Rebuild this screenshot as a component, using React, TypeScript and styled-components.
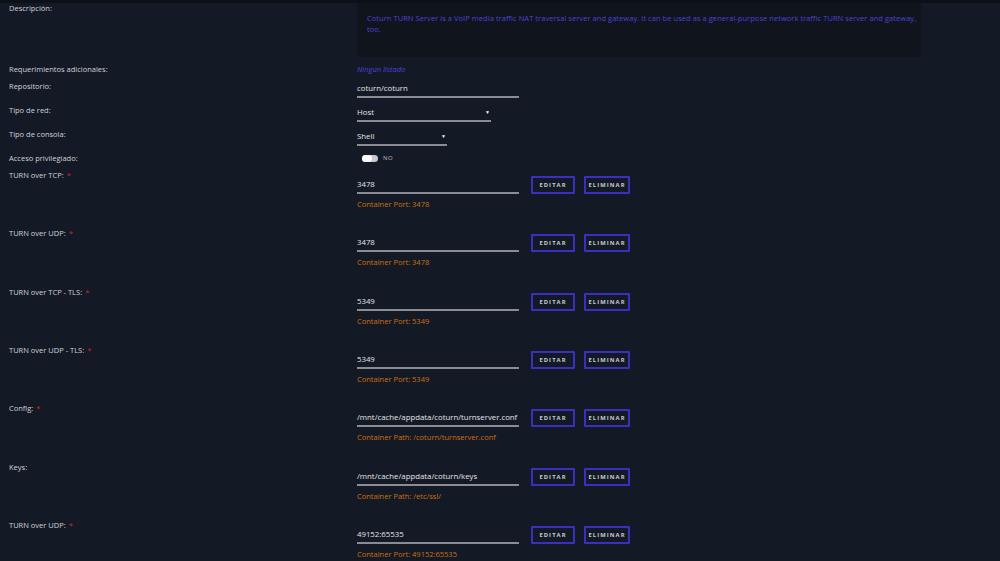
import * as React from 'react'
import styled, { createGlobalStyle } from 'styled-components'

const GlobalStyle = createGlobalStyle`
  html, body {
    margin: 0;
    padding: 0;
    background: #131a26;
    overflow: hidden;
  }
  body {
    font-family: 'Open Sans', 'Noto Sans', sans-serif;
    color: #d2d3d8;
  }
`

interface PortItem {
  label: string
  required?: boolean
  value: string
  note: string
}

const ports: PortItem[] = [
  { label: 'TURN over TCP:', required: true, value: '3478', note: 'Container Port: 3478' },
  { label: 'TURN over UDP:', required: true, value: '3478', note: 'Container Port: 3478' },
  { label: 'TURN over TCP - TLS:', required: true, value: '5349', note: 'Container Port: 5349' },
  { label: 'TURN over UDP - TLS:', required: true, value: '5349', note: 'Container Port: 5349' },
  {
    label: 'Config:',
    required: true,
    value: '/mnt/cache/appdata/coturn/turnserver.conf',
    note: 'Container Path: /coturn/turnserver.conf',
  },
  {
    label: 'Keys:',
    value: '/mnt/cache/appdata/coturn/keys',
    note: 'Container Path: /etc/ssl/',
  },
  {
    label: 'TURN over UDP:',
    required: true,
    value: '49152:65535',
    note: 'Container Port: 49152:65535',
  },
]

const TopStrip = styled.div`
  height: 3px;
  background: #0c1017;
`

const Page = styled.div`
  padding-left: 9px;
  display: flex;
  flex-direction: column;
`

const Row = styled.div<{ gapAfter?: number }>`
  display: grid;
  grid-template-columns: 348px 1fr;
  align-items: start;
  margin-bottom: ${({ gapAfter }) => gapAfter ?? 6}px;
`

const Label = styled.div<{ lh?: number }>`
  font-size: 7.5px;
  line-height: ${({ lh }) => lh ?? 12}px;
  color: #d0d1d6;
  white-space: nowrap;
`

const Star = styled.span`
  color: #d0242a;
  margin-left: 3px;
`

const DescBox = styled.div`
  width: 564px;
  height: 54px;
  box-sizing: border-box;
  padding: 10px 4px 10px 10px;
  background: #10141d;
  border-radius: 2px;
  color: #4c42d6;
  font-size: 7.5px;
  letter-spacing: 0.05px;
  line-height: 11px;
`

const NoneText = styled.div`
  font-size: 7.5px;
  line-height: 12px;
  font-style: italic;
  color: #4c42d6;
`

const Field = styled.div<{ w: number }>`
  width: ${({ w }) => w}px;
  height: 18px;
  box-sizing: border-box;
  border-bottom: 2px solid #8b8c93;
  display: flex;
  align-items: center;
  justify-content: space-between;
  font-size: 7.8px;
  color: #e3e4e8;
  white-space: nowrap;
`

const Arrow = styled.span`
  font-size: 5px;
  color: #f2f2f2;
  margin-right: 1px;
`

const ToggleRow = styled.div`
  display: flex;
  align-items: center;
  gap: 5px;
  padding-left: 5px;
  height: 12px;
`

const Track = styled.div`
  width: 16px;
  height: 7px;
  border-radius: 4px;
  background: #c9c9cc;
  display: flex;
  align-items: center;
`

const Knob = styled.div`
  width: 10px;
  height: 7px;
  border-radius: 4px;
  background: #fafafa;
`

const ToggleText = styled.span`
  font-size: 6px;
  color: #b8b9be;
  letter-spacing: 0.5px;
`

const PortValue = styled.div`
  padding-top: 7px;
  display: flex;
  flex-direction: column;
`

const InputLine = styled.div`
  display: flex;
  align-items: center;
`

const Button = styled.div<{ w: number }>`
  width: ${({ w }) => w}px;
  height: 18px;
  box-sizing: border-box;
  border: 2px solid #3a2fbf;
  border-radius: 1px;
  display: flex;
  align-items: center;
  justify-content: center;
  font-size: 5.8px;
  font-weight: 700;
  letter-spacing: 1.1px;
  color: #c9cad0;
  margin-left: ${({ w }) => (w === 44 ? 12 : 9)}px;
`

const Note = styled.div`
  margin-top: 4px;
  font-size: 7.5px;
  line-height: 12px;
  color: #cd6f0c;
`

const PortRow = ({ item }: { item: PortItem }) => (
  <Row gapAfter={17.33}>
    <Label lh={12}>
      {item.label}
      {item.required && <Star>*</Star>}
    </Label>
    <PortValue>
      <InputLine>
        <Field w={162}>{item.value}</Field>
        <Button w={44}>EDITAR</Button>
        <Button w={46}>ELIMINAR</Button>
      </InputLine>
      <Note>{item.note}</Note>
    </PortValue>
  </Row>
)

export default function App() {
  return (
    <>
      <GlobalStyle />
      <TopStrip />
      <Page>
        <Row gapAfter={6}>
          <Label lh={10}>Descripción:</Label>
          <DescBox>
            Coturn TURN Server is a VoIP media traffic NAT traversal server and gateway. It can be used as a
            general-purpose network traffic TURN server and gateway, too.
          </DescBox>
        </Row>
        <Row gapAfter={5}>
          <Label>Requerimientos adicionales:</Label>
          <NoneText>Ningún listado</NoneText>
        </Row>
        <Row>
          <Label>Repositorio:</Label>
          <Field w={162}>coturn/coturn</Field>
        </Row>
        <Row>
          <Label>Tipo de red:</Label>
          <Field w={134}>
            Host<Arrow>▼</Arrow>
          </Field>
        </Row>
        <Row>
          <Label>Tipo de consola:</Label>
          <Field w={90}>
            Shell<Arrow>▼</Arrow>
          </Field>
        </Row>
        <Row gapAfter={5}>
          <Label>Acceso privilegiado:</Label>
          <ToggleRow>
            <Track>
              <Knob />
            </Track>
            <ToggleText>NO</ToggleText>
          </ToggleRow>
        </Row>
        {ports.map((p, i) => (
          <PortRow key={i} item={p} />
        ))}
      </Page>
    </>
  )
}
